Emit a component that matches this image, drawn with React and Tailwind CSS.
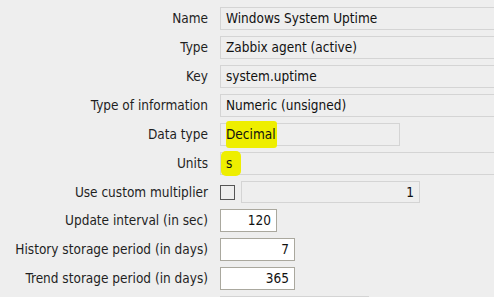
const FONT = "font-['Tahoma','DejaVu_Sans_Condensed','DejaVu_Sans',sans-serif]";

const Row = ({ label, h = 'h-[23px]', children }) => (
  <div className={`flex items-center ${h}`}>
    <div className="w-[220px] shrink-0 pr-[12px] text-right text-[13.5px] text-[#1f1f1f] whitespace-nowrap">{label}</div>
    <div className="flex items-center flex-1 h-full min-w-0">{children}</div>
  </div>
);

const Disabled = ({ className = '', children }) => (
  <div className={`h-full border border-[#d4d4d4] bg-[#eeeeee] flex items-center pl-[5px] text-[13.5px] text-[#111] whitespace-nowrap ${className}`}>
    {children}
  </div>
);

const Input = ({ w, value }) => (
  <div className={`h-full ${w} border border-[#aaa89e] bg-white flex items-center justify-end pr-[5px] text-[13.5px] text-[#111]`}>
    {value}
  </div>
);

const Mark = ({ className = '', children }) => (
  <span className={`bg-[#eeee00] rounded-[3px] ${className}`}>{children}</span>
);

export default function App() {
  return (
    <div className={`w-[494px] h-[297px] overflow-hidden bg-[#eeeeee] ${FONT}`}>
      <div className="flex flex-col gap-[6px] pt-[7px]">
        <Row label="Name"><Disabled className="flex-1 -mr-[2px]">Windows System Uptime</Disabled></Row>
        <Row label="Type"><Disabled className="flex-1 -mr-[2px]">Zabbix agent (active)</Disabled></Row>
        <Row label="Key"><Disabled className="flex-1 -mr-[2px]">system.uptime</Disabled></Row>
        <Row label="Type of information"><Disabled className="flex-1 -mr-[2px]">Numeric (unsigned)</Disabled></Row>
        <Row label="Data type">
          <Disabled className="w-[180px]">
            <Mark className="py-[3px] pr-[1px]">Decimal</Mark>
          </Disabled>
        </Row>
        <Row label="Units">
          <Disabled className="flex-1 -mr-[2px] !pl-0 items-stretch">
            <Mark className="flex items-center pl-[5px] pr-[9px] -my-[2px] rounded-[5px]">s</Mark>
          </Disabled>
        </Row>
        <Row label="Use custom multiplier" h="h-[22px]">
          <div className="w-[15px] h-[15px] border border-[#555] bg-[#eeeeee] shrink-0" />
          <Disabled className="w-[179px] ml-[6px] justify-end pr-[5px]">1</Disabled>
        </Row>
        <Row label="Update interval (in sec)"><Input w="w-[57px]" value="120" /></Row>
        <Row label="History storage period (in days)"><Input w="w-[75px]" value="7" /></Row>
        <Row label="Trend storage period (in days)"><Input w="w-[75px]" value="365" /></Row>
        <Row label=""><Disabled className="w-[149px]" /></Row>
      </div>
    </div>
  );
}
